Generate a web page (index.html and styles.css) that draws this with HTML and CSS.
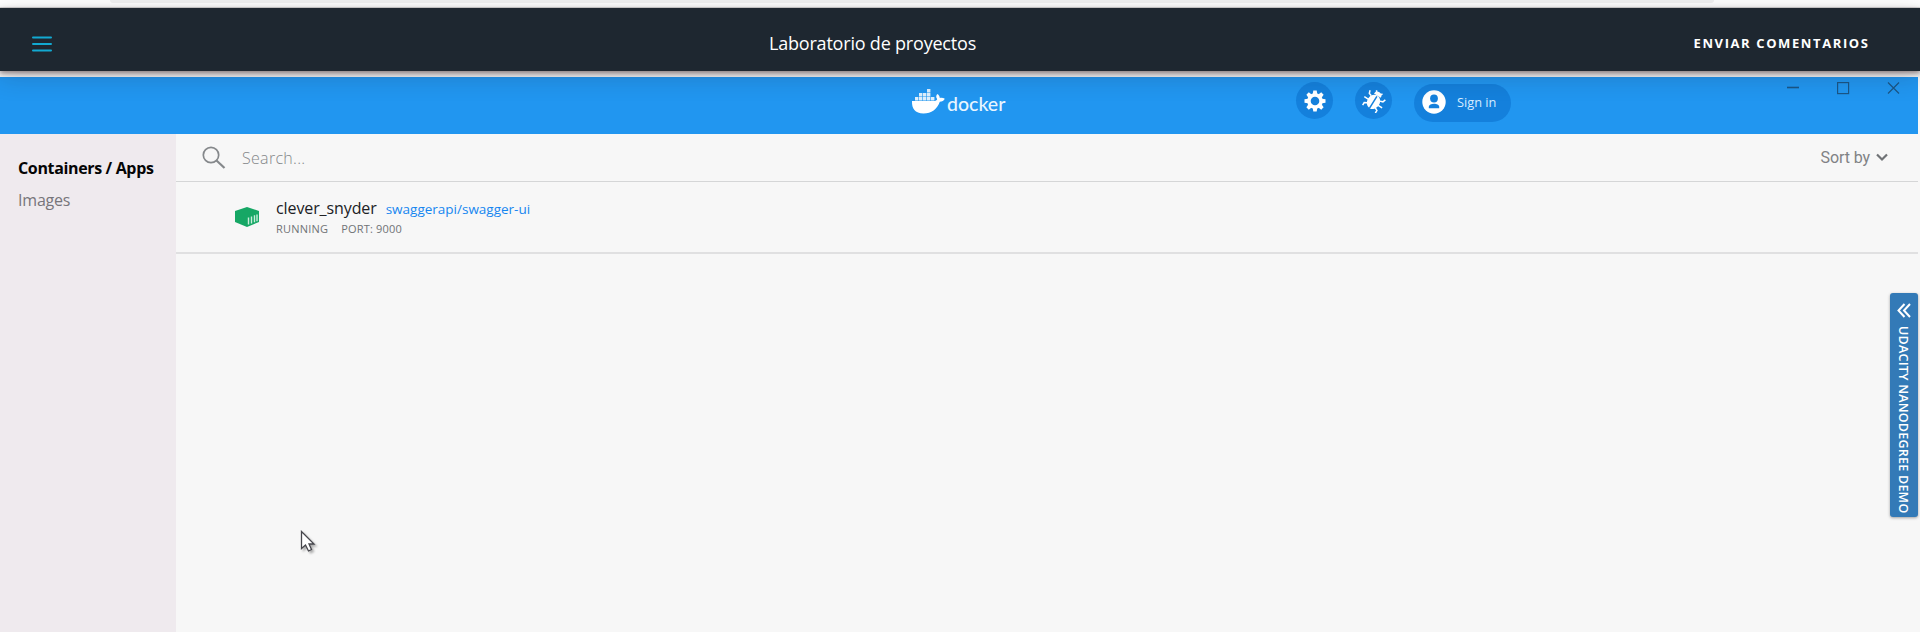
FILE: index.html
```html
<!DOCTYPE html>
<html lang="es">
<head>
<meta charset="utf-8">
<title>Laboratorio de proyectos</title>
<link rel="stylesheet" href="styles.css">
</head>
<body>
<div class="browser-strip"><div class="address-pill"></div></div>
<header class="lab-header">
  <svg class="menu-icon" width="20" height="16" viewBox="0 0 20 16"><path d="M1 1.500h18M1 8h18M1 14.500h18" stroke="#12a9d1" stroke-width="2" stroke-linecap="round"/></svg>
  <h1 class="lab-title">Laboratorio de proyectos</h1>
  <span class="feedback">ENVIAR COMENTARIOS</span>
</header>
<div class="window">
  <header class="titlebar">
    <div class="brand">
      <svg class="whale" width="35" height="25" viewBox="0 0 35 25" fill="#fff">
        <path d="M1 12h22.500c1.700 0 2.500-.8 2.700-1.900-1.500-1.700-1.100-4 .2-5.100 1.500 1 2.300 2.400 2.400 4 1.800-.3 3.700-.1 5 .8-.8 1.900-2.800 2.900-5 2.900C26 20.300 20.600 24.500 12.500 24.500 4 24.500.7 19.600 1 12z"/>
        <path opacity=".85" d="M4 8h3.400v3.400H4zM8 8h3.400v3.400H8zM12 8h3.400v3.400H12zM16 8h3.400v3.400H16zM20 8h3.400v3.400H20zM8 4h3.400v3.400H8zM12 4h3.400v3.400H12zM16 4h3.400v3.400H16zM16 0h3.400v3.400H16z"/>
      </svg>
      <span class="wordmark">docker</span>
    </div>
    <div class="actions">
      <span class="round-button">
        <svg width="22" height="22" viewBox="-11 -11 22 22"><g fill="#fff"><path id="tooth" d="M-2.300-7 -1.700-10.500h3.400L2.300-7v14L1.700 10.500h-3.400L-2.300 7z"/><use href="#tooth" transform="rotate(45)"/><use href="#tooth" transform="rotate(90)"/><use href="#tooth" transform="rotate(135)"/><circle r="7.800"/></g><circle r="4.300" fill="#1480dc"/></svg>
      </span>
      <span class="round-button">
        <svg width="24" height="24" viewBox="-12 -12 24 24"><g transform="rotate(32)"><ellipse cy="1" rx="6.300" ry="7.500" fill="#fff"/><path d="M-4-6.300a4 4 0 0 1 8 0z" fill="#fff"/><path d="M-5-3-8-4-9-7M-5 1.500h-5.500M-4.500 5-7.500 6.500v3M5-3l3-1L9-7M5 1.500h5.500M4.500 5l3 1.500v3M-2-8l-1.500-2.500M2-8l1.500-2.500" fill="none" stroke="#fff" stroke-width="1.500"/><path d="M0-5.500V9" stroke="#1480dc" stroke-width="1.500"/></g></svg>
      </span>
      <span class="signin">
        <svg width="24" height="24" viewBox="0 0 24 24"><circle cx="12" cy="12" r="11.700" fill="#fff"/><circle cx="12" cy="8.500" r="3.900" fill="#1480dc"/><path d="M6.800 18.200v-1.500c0-4 10.400-4 10.400 0v1.500z" fill="#1480dc"/></svg>
        <span class="signin-label">Sign in</span>
      </span>
    </div>
    <svg class="window-controls" width="116" height="14" viewBox="0 0 116 14" fill="none" stroke="#1a5686" stroke-width="1.200"><path d="M1 6.500h12" stroke-width="1.600"/><rect x="51.600" y="1.600" width="11" height="11"/><path d="m102 1.500 11 11m0-11-11 11"/></svg>
  </header>
  <div class="workspace">
    <nav class="sidebar">
      <span class="nav-item active">Containers / Apps</span>
      <span class="nav-item">Images</span>
    </nav>
    <main class="content">
      <div class="search-row">
        <svg class="search-icon" width="24" height="24" viewBox="0 0 24 24" fill="none" stroke="#85888b"><circle cx="9" cy="9" r="7.700" stroke-width="1.700"/><path d="m14.500 14.500 8 7.500" stroke-width="2.200"/></svg>
        <span class="placeholder">Search...</span>
        <span class="sort">Sort by</span>
        <svg class="chevron" width="12" height="9" viewBox="0 0 12 9"><path d="m1 1.500 5 5 5-5" fill="none" stroke="#707376" stroke-width="2.200"/></svg>
      </div>
      <div class="container-row">
        <svg class="box-icon" width="24" height="20" viewBox="0 0 24 20"><path d="M12 0 24 4v11l-12 5L0 15V4z" fill="#16a765"/><path d="M13.500 10.500v7M16.500 9.500v7M19.500 8.300v7M22 7.500v6.700" stroke="#c9eddb" stroke-width="1.400"/></svg>
        <div class="container-info">
          <div class="name-line"><span class="name">clever_snyder</span><span class="image">swaggerapi/swagger-ui</span></div>
          <div class="status-line"><span class="status">RUNNING</span><span class="port">PORT: 9000</span></div>
        </div>
      </div>
    </main>
  </div>
</div>
<aside class="demo-tab">
  <svg width="14" height="15" viewBox="0 0 14 15"><path d="M7.500 1 1.500 7.500l6 6.500M13 1 7 7.500l6 6.500" fill="none" stroke="#fff" stroke-width="2"/></svg>
  <span class="demo-label">UDACITY NANODEGREE DEMO</span>
</aside>
<svg class="cursor" width="18" height="25" viewBox="0 0 18 25"><path d="M1.500 1.500v17l4-3.500 3 6 3-1.500-2.500-5.500h5z" fill="#fff" stroke="#46464c" stroke-width="1.300"/></svg>
</body>
</html>
```
FILE: styles.css
```css
* { box-sizing: border-box; }
body {
  margin: 0;
  height: 632px;
  overflow: hidden;
  display: flex;
  flex-direction: column;
  background: #f7f7f7;
  font-family: "Open Sans", "Noto Sans", sans-serif;
  white-space: nowrap;
}
.browser-strip { height: 8px; flex: none; background: #fff; border-bottom: 1px solid #d9dadb; padding: 0 206px 0 110px; }
.address-pill { height: 3px; background: #f1f1f2; border-radius: 0 0 12px 12px; }
.lab-header {
  height: 63px;
  flex: none;
  position: relative;
  display: grid;
  grid-template-columns: 737px auto 1fr;
  align-items: center;
  padding: 6px 52px 0 32px;
  background: #1e2730;
  color: #fff;
  box-shadow: 0 2px 5px rgba(60, 30, 30, .5), 0 6px 24px rgba(30, 35, 50, .22);
  z-index: 1;
}
.menu-icon { margin-top: 2px; }
.lab-title { margin: 0; font-size: 18px; font-weight: 400; line-height: 24px; letter-spacing: -.2px; }
.feedback { justify-self: end; font-size: 13px; font-weight: 700; letter-spacing: 1.600px; margin-right: -1.500px; }
.window { flex: 1; margin: 6px 2px 0 0; display: flex; flex-direction: column; }
.titlebar {
  height: 57px;
  flex: none;
  display: flex;
  align-items: flex-start;
  background: #2196f0;
}
.brand { display: flex; margin: 12px 0 0 911px; width: 385px; }
.wordmark { margin-top: 2px; margin-left: 1px; font: 500 19.500px/26px "Lato", sans-serif; color: #e8f5ff; }
.actions { display: flex; align-items: flex-start; padding-top: 5px; width: 370px; }
.round-button { width: 37px; height: 37px; border-radius: 50%; background: #1480dc; display: grid; place-items: center; margin-right: 22px; }
.signin { display: flex; align-items: center; width: 97px; height: 38px; margin-top: 2px; border-radius: 19px; background: #1480dc; padding: 0 0 2px 8px; }
.signin-label { margin-left: 11px; font-size: 12.800px; color: #d7ecff; }
.window-controls { margin: 4px 0 0 120px; }
.workspace { flex: 1; display: flex; }
.sidebar { width: 176px; background: #efeaee; padding: 22px 0 0 18px; display: flex; flex-direction: column; gap: 8px; }
.nav-item { font-size: 16px; line-height: 24px; letter-spacing: -.2px; color: #77757a; }
.nav-item.active { font-weight: 700; letter-spacing: -.35px; color: #050505; }
.content { flex: 1; background: #f7f7f7; }
.search-row { height: 48px; display: flex; align-items: center; padding: 0 30px 0 26px; border-bottom: 1px solid #d5d6d7; }
.placeholder { margin-left: 16px; font-size: 16px; font-weight: 300; letter-spacing: .3px; color: #85878a; }
.sort { margin-left: auto; font: 400 16px "Roboto", sans-serif; letter-spacing: -.1px; color: #808285; }
.chevron { margin-left: 6px; }
.container-row { height: 72px; display: flex; padding: 15px 0 0 59px; border-bottom: 2px solid #e0e0e1; }
.box-icon { margin-top: 10px; }
.container-info { margin-left: 17px; }
.name-line { display: flex; align-items: baseline; line-height: 22px; }
.name { font-size: 16px; letter-spacing: -.1px; color: #202124; }
.image { margin-left: 9px; font-size: 13.500px; color: #1686f0; }
.status-line { display: flex; gap: 13px; font-size: 11px; line-height: 18px; letter-spacing: .2px; color: #707376; }
.demo-tab {
  position: absolute;
  left: 1890px;
  top: 293px;
  width: 28px;
  height: 224px;
  border-radius: 3px;
  background: #337ab7;
  box-shadow: 0 1px 3px rgba(0, 0, 0, .35);
  display: flex;
  flex-direction: column;
  align-items: center;
  padding-top: 10px;
}
.demo-label { margin: 8px 3px 0 0; writing-mode: vertical-rl; font-size: 12.500px; line-height: 18px; font-weight: 600; letter-spacing: .25px; color: #fff; }
.cursor { position: absolute; left: 300px; top: 530px; filter: drop-shadow(2px 2px 1px rgba(0, 0, 0, .3)); }
```
